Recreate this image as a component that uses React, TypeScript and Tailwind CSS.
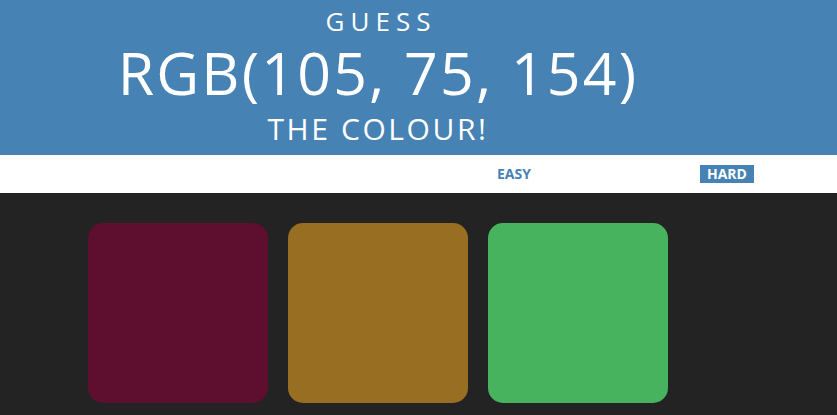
const squares = ["#5e0e2e", "#976e22", "#47b35f"];

const App = () => {
  return (
    <div className="min-h-[415px] bg-[#232323] font-['Open_Sans',sans-serif]">
      <header className="h-[155px] bg-[#4682b4] text-white">
        <h1 className="w-[756px] pt-[8px] text-center font-normal uppercase">
          <span className="block h-[26px] text-[26px] leading-[26px] tracking-[6px] pl-[6px]">
            Guess
          </span>
          <span className="mt-[9px] block h-[59px] text-[59px] leading-[59px] tracking-[2.2px]">
            RGB(105, 75, 154)
          </span>
          <span className="mt-[12px] block h-[30px] text-[30px] leading-[30px] tracking-[2.6px]">
            The Colour!
          </span>
        </h1>
      </header>

      <div className="h-[38px] bg-white">
        <div className="flex h-full w-[756px] items-center">
          <button className="ml-[490px] px-[7px] text-[14px] font-bold uppercase leading-[18px] text-[#4682b4]">
            Easy
          </button>
          <button className="ml-[162px] h-[18px] w-[54px] bg-[#4682b4] text-[14px] font-bold uppercase leading-[18px] text-white">
            Hard
          </button>
        </div>
      </div>

      <div className="w-[756px]">
        <div className="mx-auto flex w-[600px] flex-wrap pt-[20px]">
          {squares.map((c) => (
            <div
              key={c}
              className="m-[10px] h-[180px] w-[180px] rounded-[15px]"
              style={{ backgroundColor: c }}
            />
          ))}
        </div>
      </div>
    </div>
  );
};

export default App;
